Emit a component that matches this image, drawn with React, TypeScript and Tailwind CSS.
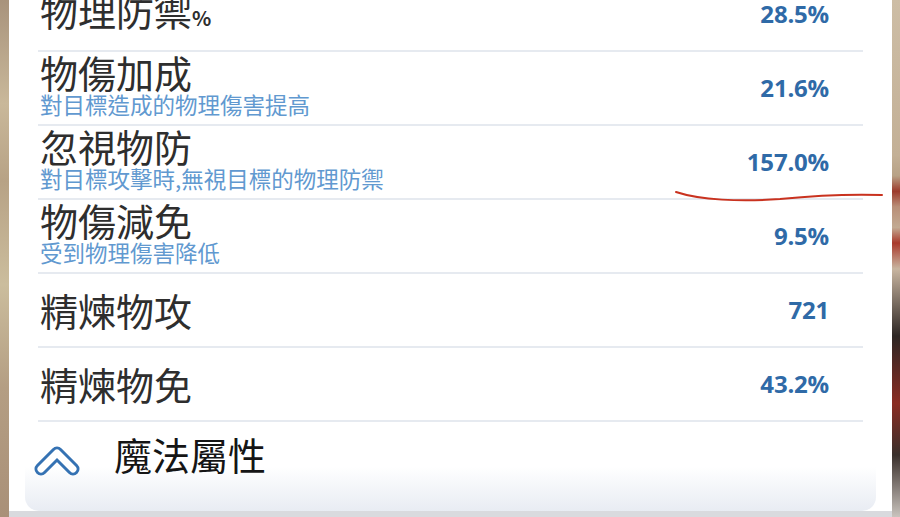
import React from 'react';

type Stat = {
  name: React.ReactNode;
  desc?: string;
  value: string;
};

const stats: Stat[] = [
  {
    name: (
      <>
        物理防禦<span className="text-[20px] font-bold">%</span>
      </>
    ),
    value: '28.5%',
  },
  { name: '物傷加成', desc: '對目標造成的物理傷害提高', value: '21.6%' },
  { name: '忽視物防', desc: '對目標攻擊時,無視目標的物理防禦', value: '157.0%' },
  { name: '物傷減免', desc: '受到物理傷害降低', value: '9.5%' },
  { name: '精煉物攻', value: '721' },
  { name: '精煉物免', value: '43.2%' },
];

const cjk = "font-['Noto_Sans_CJK_TC','Noto_Sans_CJK_SC',sans-serif]";

const StatRow: React.FC<{ stat: Stat }> = ({ stat }) => (
  <div className="flex h-[74px] items-center justify-between border-b-2 border-[#e6eaf0] pl-[2px] pr-[34px]">
    <div className={`flex flex-col ${cjk} ${stat.desc ? 'pb-[7px]' : ''}`}>
      <span className="text-[38px] leading-[36px] text-[#2e2e2e]">{stat.name}</span>
      {stat.desc && (
        <span className="mt-[3px] text-[22.5px] leading-[22px] text-[#6199d0]">{stat.desc}</span>
      )}
    </div>
    <span className="font-['Open_Sans',sans-serif] text-[24px] font-bold tracking-[-0.2px] text-[#2f6aa7]">
      {stat.value}
    </span>
  </div>
);

const ChevronUp: React.FC = () => (
  <svg width="52" height="38" viewBox="0 0 52 38" className="shrink-0">
    <polyline
      points="9,29 25,13 41,29"
      fill="none"
      stroke="#3572b3"
      strokeWidth="13"
      strokeLinecap="round"
      strokeLinejoin="round"
    />
    <polyline
      points="9,29 25,13 41,29"
      fill="none"
      stroke="#ffffff"
      strokeWidth="7"
      strokeLinecap="round"
      strokeLinejoin="round"
    />
  </svg>
);

const App: React.FC = () => {
  return (
    <div className="relative flex h-[517px] w-[900px] overflow-hidden bg-[#d9dade]">
      <div className="w-[9px] shrink-0 bg-[linear-gradient(180deg,#a8937c_0%,#c9b89a_20%,#b7a285_35%,#cbbd9d_55%,#b49e83_75%,#a99078_100%)]" />

      <div className="flex h-[511px] w-[883px] shrink-0 flex-col bg-white">
        <div className="mx-[29px] mt-[-22px]">
          {stats.map((stat, i) => (
            <StatRow key={i} stat={stat} />
          ))}
        </div>
        <div className="mx-[16px] flex flex-1 items-start rounded-b-[14px] bg-[linear-gradient(180deg,#ffffff_0%,#ffffff_50%,#e8ecf3_100%)] pt-[14px]">
          <div className="ml-[7px] mt-[4px]">
            <ChevronUp />
          </div>
          <span className={`ml-[30px] mt-[-2px] text-[38px] leading-[40px] text-[#151515] ${cjk}`}>魔法屬性</span>
        </div>
      </div>

      <div className="w-[8px] shrink-0 bg-[linear-gradient(180deg,#cdbda5_0%,#c3b096_30%,#b8a286_34%,#9c3b2c_37%,#b98f78_40%,#c2aa92_44%,#a9392b_47%,#c8b5a0_52%,#2d2624_65%,#8a2c22_78%,#3a302c_88%,#c9c3bd_100%)]" />

      <svg
        className="pointer-events-none absolute left-0 top-0"
        width="900"
        height="517"
        viewBox="0 0 900 517"
      >
        <path
          d="M676 192 C 700 200, 740 202, 780 199 C 820 195, 850 194, 882 195"
          fill="none"
          stroke="#c9321f"
          strokeWidth="2"
          strokeLinecap="round"
        />
      </svg>
    </div>
  );
};

export default App;
